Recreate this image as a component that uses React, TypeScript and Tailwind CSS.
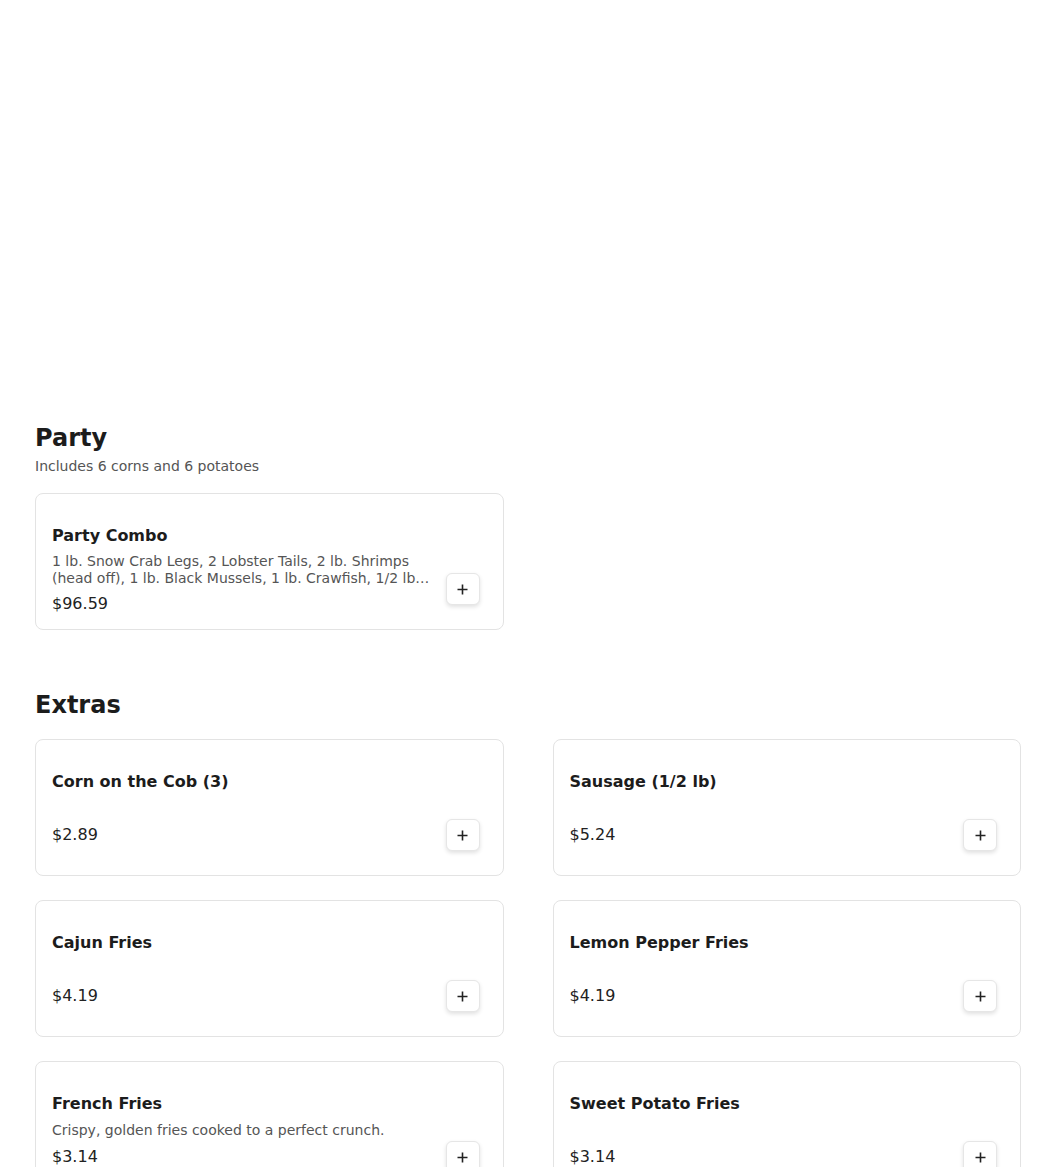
import React from 'react';

interface Item {
  name: string;
  desc?: string;
  price: string;
}

const party: Item[] = [
  {
    name: 'Party Combo',
    desc: '1 lb. Snow Crab Legs, 2 Lobster Tails, 2 lb. Shrimps (head off), 1 lb. Black Mussels, 1 lb. Crawfish, 1/2 lb. Sausage, 6 Corn, 6 Potatoes',
    price: '$96.59',
  },
];

const extras: Item[] = [
  { name: 'Corn on the Cob (3)', price: '$2.89' },
  { name: 'Sausage (1/2 lb)', price: '$5.24' },
  { name: 'Cajun Fries', price: '$4.19' },
  { name: 'Lemon Pepper Fries', price: '$4.19' },
  { name: 'French Fries', desc: 'Crispy, golden fries cooked to a perfect crunch.', price: '$3.14' },
  { name: 'Sweet Potato Fries', price: '$3.14' },
];

const ItemCard: React.FC<{ item: Item }> = ({ item }) => (
  <div className="h-[137px] border border-[#e3e3e3] rounded-lg bg-white flex gap-4 pl-4 pr-[23px] pt-[30px] pb-[24px]">
    <div className="flex-1 min-w-0 h-[77px] flex flex-col justify-between">
      <h3 className="shrink-0 text-base leading-6 font-bold text-[#1c1c1c]">{item.name}</h3>
      {item.desc && (
        <p className="shrink-0 mt-[5px] text-sm leading-[17px] text-[#555] line-clamp-2">{item.desc}</p>
      )}
      <span className="shrink-0 mt-[5px] text-base leading-6 text-[#222]">{item.price}</span>
    </div>
    <button className="self-end w-[34px] h-[32px] shrink-0 flex items-center justify-center rounded-md border border-[#e6e6e6] bg-white shadow-[0_2px_4px_rgba(0,0,0,0.12)]">
      <svg width="11" height="11" viewBox="0 0 11 11" fill="none" stroke="#222" strokeWidth="1.6">
        <path d="M5.5 0.5v10M0.5 5.5h10" />
      </svg>
    </button>
  </div>
);

export default function App() {
  return (
    <div className="min-h-screen bg-white" style={{ fontFamily: '"DejaVu Sans", sans-serif' }}>
      <div className="h-[402px]" />
      <div className="ml-[35px] w-[986px] pt-5">
        <section>
          <h2 className="text-2xl leading-8 font-bold text-[#1c1c1c]">Party</h2>
          <p className="mt-[2px] text-sm leading-5 text-[#555]">Includes 6 corns and 6 potatoes</p>
          <div className="mt-[17px] grid grid-cols-2 gap-x-[49px] gap-y-6">
            {party.map((it) => (
              <ItemCard key={it.name} item={it} />
            ))}
          </div>
        </section>
        <section className="mt-[59px]">
          <h2 className="text-2xl leading-8 font-bold text-[#1c1c1c]">Extras</h2>
          <div className="mt-[18px] grid grid-cols-2 gap-x-[49px] gap-y-6">
            {extras.map((it) => (
              <ItemCard key={it.name} item={it} />
            ))}
          </div>
        </section>
      </div>
    </div>
  );
}
